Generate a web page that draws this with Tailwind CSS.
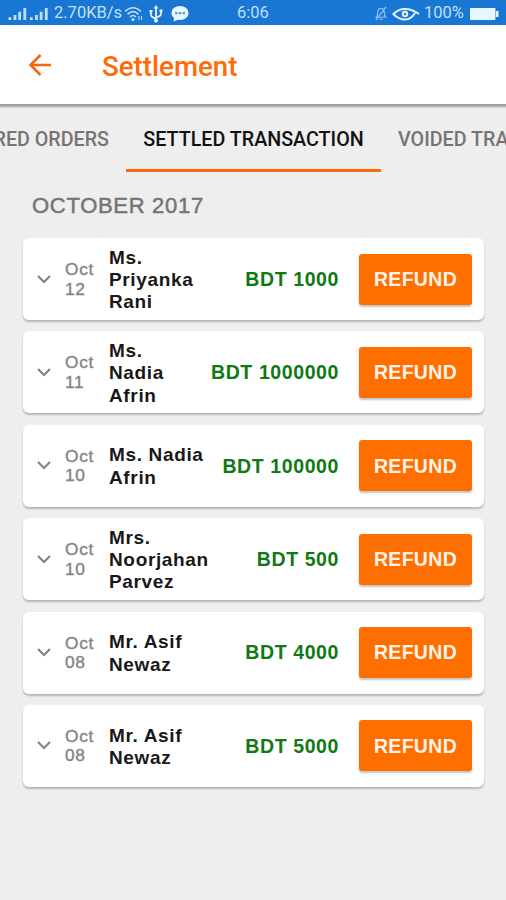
<!DOCTYPE html>
<html lang="en">
<head>
<meta charset="utf-8">
<title>Settlement</title>
<script src="https://cdn.jsdelivr.net/npm/@tailwindcss/browser@4"></script>
</head>
<body class="w-[506px] h-[900px] overflow-hidden bg-[#eeeeee] font-['Liberation_Sans',Arial,sans-serif]">
<header>
  <div class="h-[25px] bg-[#1976d2] flex items-center pl-[7px] pr-[7px] pt-[2px] text-[#bfe0fb] font-[Roboto,sans-serif] text-[16.500px] leading-none whitespace-nowrap">
    <svg class="w-[44px] h-[14px] shrink-0 fill-current" viewBox="0 0 44 15"><path d="M0 11h3v3H0zM5.500 8.500h3V14h-3zM10.500 5h3v9h-3zM16 1h3v13h-3zM23 11h3v3h-3zM28.500 8.500h3V14h-3zM33.500 5h3v9h-3zM39 1h3v13h-3z"/></svg>
    <span class="w-[70px] ml-[3px]">2.70KB/s</span>
    <svg class="w-[20px] h-[16px] shrink-0 fill-none stroke-current" viewBox="0 0 20 16" stroke-width="1.600"><path d="M1 5.500Q9 -2 17 5.500M3.500 8.300Q9 3 14.500 8.300M6 11Q9 8 12 11"/><circle cx="9" cy="13.500" r=".8"/><path d="M15 10v4M17.500 10v4" stroke-width="1"/></svg>
    <svg class="w-[14px] h-[18px] ml-[5px] shrink-0 fill-none stroke-[#e4f3ff]" viewBox="0 0 14 18" stroke-width="1.800"><path d="M7 2v14M2 6v4q0 2 5 3.500M12 5v4q0 2-5 3.500"/><path d="M7 0l2.500 3.500h-5z" class="fill-[#e4f3ff] stroke-none"/><circle cx="7" cy="15.500" r="2" class="fill-[#e4f3ff] stroke-none"/><path d="M.5 5h3v2.500h-3zM10.500 4.500h3v2.500h-3z" class="fill-[#e4f3ff] stroke-none"/></svg>
    <svg class="w-[18px] h-[16px] ml-[8px] shrink-0" viewBox="0 0 18 16"><path d="M9 0C4 0 .5 3 .5 7c0 2 1 3.800 2.500 5L2.500 15.500 7 13.800c6 1 10.500-2.300 10.500-6.800C17.500 3 14 0 9 0z" class="fill-[#e9f5ff]"/><path d="M4 6h2.500v2.200H4zM7.800 6h2.500v2.200H7.800zM11.600 6h2.500v2.200h-2.500z" class="fill-[#5a9ade]"/></svg>
    <span class="ml-[48px] w-[34px]">6:06</span>
    <svg class="w-[14px] h-[15px] ml-auto shrink-0 fill-none stroke-[#8fc0f0]" viewBox="0 0 14 16" stroke-width="1.300"><path d="M2 12q1.500-1.500 1.500-5 0-4.500 3.500-4.500T10.500 7q0 3.500 1.500 5zM5.500 14.200h3M12.500 1L1.500 15"/></svg>
    <svg class="w-[28px] h-[14px] ml-[4px] shrink-0 fill-none stroke-[#e4f3ff]" viewBox="0 0 28 14" stroke-width="2"><path d="M1 7.500Q6 2 13 2t14 5M1 7q6 5.500 12 5.500T23 6"/><circle cx="13" cy="7" r="2.200"/></svg>
    <span class="ml-[4px] w-[41px]">100%</span>
    <svg class="w-[29px] h-[14px] ml-[5px] shrink-0 fill-[#e9f5ff]" viewBox="0 0 29 14"><rect x="0" y="1" width="25.500" height="12" rx="1"/><rect x="26" y="4" width="2.500" height="6"/></svg>
  </div>
  <div class="h-[79px] bg-white flex items-center pl-[28px] pb-px">
    <svg class="w-[24px] h-[24px] mt-[1px] fill-none stroke-[#f9650c]" viewBox="0 0 24 24" stroke-width="2.500"><path d="M23 12H3M12.500 2L2.500 12l10 10"/></svg>
    <h1 class="ml-[50px] mt-[6px] font-[Roboto,sans-serif] font-medium text-[27.700px] leading-none text-[#ff6a0a]">Settlement</h1>
  </div>
  <div class="h-[4px] bg-linear-to-b from-[#9c9c9c] via-[#a8a8a8] to-[#e6e6e6]"></div>
</header>
<nav class="h-[64px] overflow-hidden flex justify-end font-[Roboto,sans-serif] font-medium text-[19.700px] leading-none text-[#757575] whitespace-nowrap">
  <div class="w-[126px] flex justify-end pr-[17px] pt-[22px] shrink-0"><span>DELIVERED ORDERS</span></div>
  <div class="w-[255px] flex justify-center pt-[22px] shrink-0 text-[#111] border-b-3 border-[#f9690e]"><span>SETTLED TRANSACTION</span></div>
  <div class="w-[125px] pl-[17px] pt-[22px] shrink-0"><span>VOIDED TRANSACTION</span></div>
</nav>
<main class="px-[23px]">
  <h2 class="h-[66px] pt-[23px] pl-[9px] text-[22px] leading-none tracking-[0.7px] text-[#757575] [-webkit-text-stroke:0.5px_#757575]">OCTOBER 2017</h2>
  <ul id="list" class="w-[461px] flex flex-col gap-[11.400px]"></ul>
</main>
<template id="row">
  <li class="h-[82px] bg-white rounded-[6px] shadow-[0_2px_2px_rgba(0,0,0,0.24)] flex items-center pl-[14px] pr-[12px]">
    <svg class="w-[14px] h-[9px] shrink-0 fill-none stroke-[#858585]" viewBox="0 0 14 9" stroke-width="2.200"><path d="M1 1l6 6 6-6"/></svg>
    <div class="date ml-[14px] w-[44px] shrink-0 pr-[10px] pt-px text-[17.300px] leading-[19.500px] tracking-[0.700px] text-[#858585] [-webkit-text-stroke:0.4px_#858585]"></div>
    <div class="name w-[90px] shrink-0 pt-[2px] text-[19px] leading-[22.300px] font-bold tracking-[0.650px] text-[#181818] whitespace-pre"></div>
    <div class="amount flex-1 pt-px text-right text-[19.500px] leading-none font-bold tracking-[0.600px] text-[#0f7a14] whitespace-nowrap"></div>
    <button class="ml-[20px] w-[113px] h-[51px] shrink-0 rounded-[3px] bg-[#ff6f00] shadow-[0_2px_2px_rgba(0,0,0,0.24)] pt-px text-[19.500px] leading-none font-bold tracking-[0.300px] text-[#fff3ea]">REFUND</button>
  </li>
</template>
<script>
const rows = [
  ["Oct 12", "Ms.\nPriyanka\nRani", "BDT 1000"],
  ["Oct 11", "Ms.\nNadia\nAfrin", "BDT 1000000"],
  ["Oct 10", "Ms. Nadia\nAfrin", "BDT 100000"],
  ["Oct 10", "Mrs.\nNoorjahan\nParvez", "BDT 500"],
  ["Oct 08", "Mr. Asif\nNewaz", "BDT 4000"],
  ["Oct 08", "Mr. Asif\nNewaz", "BDT 5000"],
];
for (const [date, name, amount] of rows) {
  const n = document.getElementById("row").content.cloneNode(true);
  n.querySelector(".date").textContent = date;
  n.querySelector(".name").textContent = name;
  n.querySelector(".amount").textContent = amount;
  document.getElementById("list").append(n);
}
</script>
</body>
</html>
